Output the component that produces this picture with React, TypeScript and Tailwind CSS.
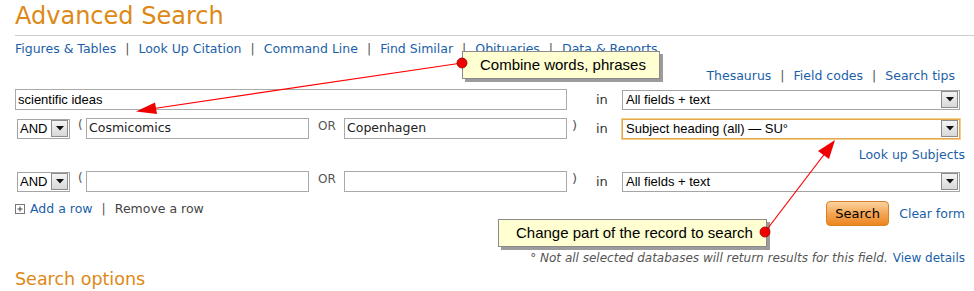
import React from 'react';

const link = 'text-[#1c5fa8]';

const DropButton = () => (
  <span className="flex h-[17px] w-[17px] items-center justify-center border border-[#8c8c8c] bg-gradient-to-b from-[#f4f4f4] to-[#d8d8d8]">
    <svg width="8" height="5" viewBox="0 0 8 5">
      <path d="M0 0 L8 0 L4 4.5 Z" fill="#111" />
    </svg>
  </span>
);

const FieldSelect = ({ value, active = false }: { value: string; active?: boolean }) => (
  <div
    className={`flex h-[20px] w-[338px] items-center justify-between bg-white pl-[3px] pr-[1px] text-[13px] text-black ${
      active ? 'border border-[#e2a84a] shadow-[0_0_0_1px_#f0cf8f]' : 'border border-[#a5a5a5]'
    }`}
    style={{ fontFamily: '"Liberation Sans", Arial, sans-serif' }}
  >
    <span>{value}</span>
    <DropButton />
  </div>
);

const BoolSelect = () => (
  <div
    className="flex h-[20px] w-[53px] items-center justify-between border border-[#a5a5a5] bg-white pl-[2px] pr-[1px] text-[13px] text-black"
    style={{ fontFamily: '"Liberation Sans", Arial, sans-serif' }}
  >
    <span>AND</span>
    <DropButton />
  </div>
);

const TextBox = ({ value = '', width }: { value?: string; width: string }) => (
  <div className={`flex h-[21px] items-center border border-[#a9a9a9] bg-white pl-[2px] text-[12.5px] text-[#222] ${width}`}>
    {value}
  </div>
);

const Sep = () => <span className="px-[9px] text-[#555]">|</span>;

const PairRow = ({ left = '', right = '', field, active = false }: { left?: string; right?: string; field: string; active?: boolean }) => (
  <div className="flex items-center">
    <div className="ml-[2px] w-[53px]">
      <BoolSelect />
    </div>
    <div className="h-[21px] w-[16px] pl-[8px] text-[12px] leading-[14px] text-[#555]">(</div>
    <TextBox value={left} width="w-[223px]" />
    <div className="h-[21px] w-[35px] pl-[9px] text-[12px] leading-[17px] text-[#555]">OR</div>
    <TextBox value={right} width="w-[223px]" />
    <div className="flex h-[21px] w-[55px] text-[13px] text-[#333]">
      <span className="w-[29px] pl-[5px] leading-[16px] text-[#555]">)</span>
      <span className="leading-[21px]">in</span>
    </div>
    <FieldSelect value={field} active={active} />
  </div>
);

export default function App() {
  return (
    <div
      className="relative h-[291px] w-[974px] overflow-hidden bg-white pl-[15px]"
      style={{ fontFamily: '"DejaVu Sans", Verdana, sans-serif' }}
    >
      <h1 className="pt-[2px] text-[24px] leading-[28px] text-[#dc8916]">Advanced Search</h1>
      <div className="mt-[5px] border-t border-[#cdcdcd]" />

      <nav className={`mt-[5px] flex h-[16px] items-center text-[12.5px] ${link}`}>
        <span>Figures &amp; Tables</span>
        <Sep />
        <span>Look Up Citation</span>
        <Sep />
        <span>Command Line</span>
        <Sep />
        <span>Find Similar</span>
        <Sep />
        <span>Obituaries</span>
        <Sep />
        <span>Data &amp; Reports</span>
      </nav>

      <div className={`mt-[11px] flex h-[16px] w-[940px] items-center justify-end text-[12.5px] ${link}`}>
        <span>Thesaurus</span>
        <Sep />
        <span>Field codes</span>
        <Sep />
        <span>Search tips</span>
      </div>

      <div className="mt-[5px] flex items-center">
        <div
          className="flex h-[21px] w-[552px] items-center border border-[#a9a9a9] bg-white pl-[2px] text-[13px] text-black"
          style={{ fontFamily: '"Liberation Sans", Arial, sans-serif' }}
        >
          scientific ideas
        </div>
        <div className="w-[55px] pl-[29px] text-[13px] text-[#333]">in</div>
        <FieldSelect value="All fields + text" />
      </div>

      <div className="mt-[8px]">
        <PairRow left="Cosmicomics" right="Copenhagen" field="Subject heading (all) — SU°" active />
      </div>

      <div className={`mt-[8px] flex h-[16px] w-[950px] items-center justify-end text-[12.5px] ${link}`}>
        Look up Subjects
      </div>

      <div className="mt-[8px]">
        <PairRow field="All fields + text" />
      </div>

      <div className="mt-[9px] flex h-[25px] w-[950px] items-start justify-between">
        <div className="-mt-[1px] flex items-center text-[12.5px]">
          <svg width="11" height="11" viewBox="0 0 11 11" className="mr-[4px]">
            <rect x="0.5" y="0.5" width="9" height="9" fill="white" stroke="#777" />
            <path d="M2.5 5 H7.5 M5 2.5 V7.5" stroke="#444" />
          </svg>
          <span className={link}>Add a row</span>
          <Sep />
          <span className="text-[#444]">Remove a row</span>
        </div>
        <div className="flex items-center">
          <div className="flex h-[25px] w-[63px] items-center justify-center rounded-[4px] border border-[#d9822a] bg-gradient-to-b from-[#fbd3a0] via-[#f4a654] to-[#ec8618] text-[13px] text-black">
            Search
          </div>
          <span className={`ml-[10px] pt-[2px] text-[12.5px] ${link}`}>Clear form</span>
        </div>
      </div>

      <div className="mt-[25px] flex h-[14px] w-[950px] items-center justify-end text-[12px]">
        <span className="italic text-[#555]">° Not all selected databases will return results for this field.</span>
        <span className={`ml-[5px] ${link}`}>View details</span>
      </div>

      <div className="mt-[3px] text-[17.5px] leading-[22px] text-[#dc8916]">Search options</div>

      {/* callouts */}
      <div
        className="absolute left-[462px] top-[51px] flex h-[28px] w-[198px] items-center border border-[#8a8a8a] bg-[#ffffd2] pl-[17px] text-[15px] text-black shadow-[3px_3px_0_#9c9c9c]"
        style={{ fontFamily: '"Liberation Sans", Arial, sans-serif' }}
      >
        Combine words, phrases
      </div>
      <div
        className="absolute left-[498px] top-[219px] flex h-[28px] w-[269px] items-center border border-[#8a8a8a] bg-[#ffffd2] pl-[17px] text-[15px] text-black shadow-[3px_3px_0_#9c9c9c]"
        style={{ fontFamily: '"Liberation Sans", Arial, sans-serif' }}
      >
        Change part of the record to search
      </div>

      <svg className="pointer-events-none absolute left-0 top-0" width="974" height="291" viewBox="0 0 974 291">
        <line x1="462" y1="63" x2="154" y2="108.5" stroke="#f00" strokeWidth="1.2" />
        <path d="M136 111.5 L157 114 L155 102.5 Z" fill="#e00" />
        <circle cx="462" cy="63" r="5" fill="#e00" stroke="#900" strokeWidth="0.8" />

        <line x1="765" y1="232" x2="826" y2="152" stroke="#f00" strokeWidth="1.2" />
        <path d="M835 140 L829 159 L818 151 Z" fill="#e00" />
        <circle cx="765" cy="232" r="5" fill="#e00" stroke="#900" strokeWidth="0.8" />
      </svg>
    </div>
  );
}
